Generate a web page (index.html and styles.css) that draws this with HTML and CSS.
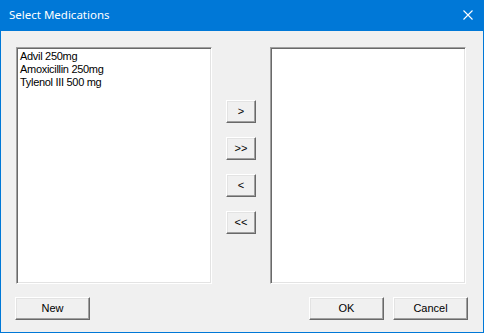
FILE: index.html
```html
<!DOCTYPE html>
<html>
<head>
<meta charset="utf-8">
<title>Select Medications</title>
<link rel="stylesheet" href="styles.css">
</head>
<body>
<div class="window">
  <div class="titlebar">
    <span class="title">Select Medications</span>
    <span class="close">
      <svg width="10" height="10" viewBox="0 0 10 10"><path d="M0.5 0.5 L9.5 9.5 M9.5 0.5 L0.5 9.5" stroke="#fff" stroke-width="1.1" fill="none"/></svg>
    </span>
  </div>
  <div class="content">
    <div class="lists">
      <div class="listbox">
        <div class="item">Advil 250mg</div>
        <div class="item">Amoxicillin 250mg</div>
        <div class="item">Tylenol III 500 mg</div>
      </div>
      <div class="movers">
        <button class="btn small">&gt;</button>
        <button class="btn small">&gt;&gt;</button>
        <button class="btn small">&lt;</button>
        <button class="btn small">&lt;&lt;</button>
      </div>
      <div class="listbox"></div>
    </div>
    <div class="footer">
      <button class="btn wide">New</button>
      <div class="right-buttons">
        <button class="btn wide ok">OK</button>
        <button class="btn wide">Cancel</button>
      </div>
    </div>
  </div>
</div>
</body>
</html>
```
FILE: styles.css
```css
html, body {
  margin: 0;
  padding: 0;
  background: #f0f0f0;
}
.window {
  width: 484px;
  height: 333px;
  box-sizing: border-box;
  border: 1px solid #0078d7;
  border-top: none;
  background: #f0f0f0;
  display: flex;
  flex-direction: column;
}
.titlebar {
  height: 31px;
  margin: 0 -1px;
  background: #0078d7;
  display: flex;
  align-items: center;
  justify-content: space-between;
  padding: 0 11px 0 9px;
  box-sizing: border-box;
}
.title {
  color: #fff;
  font-family: "Noto Sans", sans-serif;
  font-size: 11.5px;
  position: relative;
  top: -1px;
}
.close {
  display: flex;
  width: 10px;
  height: 10px;
  position: relative;
  top: -1px;
}
.content {
  flex: 1;
  display: flex;
  flex-direction: column;
  padding: 16px 17px 0 15px;
}
.lists {
  display: grid;
  grid-template-columns: 196px 58px 196px;
  height: 237px;
}
.listbox {
  background: #fff;
  box-sizing: border-box;
  border: 1px solid;
  border-color: #a0a0a0 #ffffff #ffffff #a0a0a0;
  box-shadow: inset 1px 1px #696969, inset -1px -1px #e3e3e3;
  padding: 2px 3px;
  font-family: "Liberation Sans", Arial, sans-serif;
  font-size: 11px;
  letter-spacing: -0.3px;
  color: #000;
}
.item {
  height: 13px;
  line-height: 13px;
  white-space: nowrap;
}
.movers {
  display: flex;
  flex-direction: column;
  align-items: center;
  padding-top: 53px;
  gap: 14px;
}
.btn {
  box-sizing: border-box;
  background: #f0f0f0;
  border: 1px solid;
  border-color: #ffffff #696969 #696969 #ffffff;
  box-shadow: inset -1px -1px #a0a0a0, inset 1px 1px #e3e3e3;
  font-family: "Liberation Sans", Arial, sans-serif;
  font-size: 11px;
  color: #000;
  padding: 0;
  margin: 0;
  height: 23px;
  line-height: 21px;
  text-align: center;
}
.small {
  width: 30px;
}
.wide {
  width: 75px;
}
.footer {
  display: flex;
  justify-content: space-between;
  margin-top: 13px;
  margin-left: -1px;
  margin-right: -2px;
}
.right-buttons {
  display: flex;
  gap: 9px;
}
```
